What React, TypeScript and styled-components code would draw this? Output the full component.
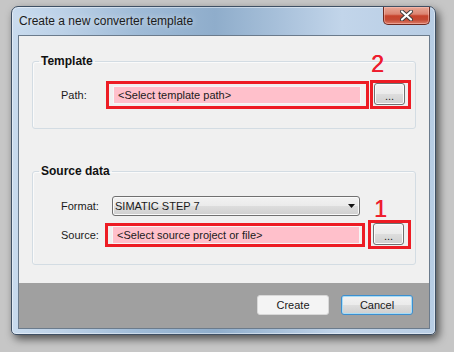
import React from "react";
import styled, { createGlobalStyle } from "styled-components";

const GlobalStyle = createGlobalStyle`
  html, body {
    margin: 0;
    padding: 0;
    background: #c6c6c6;
    font-family: "Liberation Sans", Arial, sans-serif;
  }
`;

const Desktop = styled.div`
  padding: 6px 0 0 11px;
  height: 352px;
  box-sizing: border-box;
`;

const Window = styled.div`
  width: 425px;
  height: 329px;
  box-sizing: border-box;
  display: flex;
  flex-direction: column;
  padding: 0 5px 5px 6px;
  border: 1px solid #3f5064;
  border-radius: 7px 7px 5px 5px;
  background: linear-gradient(
    90deg,
    #c9dbee 0%,
    #bcd1e7 12%,
    #9fbbd7 30%,
    #8fadcb 48%,
    #a6bfd9 62%,
    #c2d5ea 78%,
    #b8cde4 100%
  );
  box-shadow: 3px 4px 9px rgba(0, 0, 0, 0.6), inset 0 0 0 1px rgba(255, 255, 255, 0.45);
`;

const TitleBar = styled.div`
  height: 28px;
  display: flex;
  align-items: center;
  justify-content: space-between;
`;

const Caption = styled.span`
  padding-left: 1px;
  font-size: 12px;
  color: #1b1b1b;
  text-shadow: 0 0 6px rgba(255, 255, 255, 0.7);
`;

const CloseButton = styled.div`
  align-self: flex-start;
  width: 47px;
  height: 18px;
  box-sizing: border-box;
  display: flex;
  align-items: center;
  justify-content: center;
  border: 1px solid #6e2a20;
  border-top: none;
  border-radius: 0 0 5px 5px;
  background: linear-gradient(
    #e8a796 0%,
    #dc8471 42%,
    #c7432c 52%,
    #c44a34 75%,
    #dc7c68 100%
  );
  box-shadow: inset 0 0 0 1px rgba(255, 200, 190, 0.5);
`;

const Client = styled.div`
  flex: 1;
  display: flex;
  flex-direction: column;
  background: #f0f0f0;
  border: 1px solid #6b7b8c;
`;

const Body = styled.div`
  flex: 1;
  padding: 18px 13px 0;
`;

const Group = styled.fieldset<{ $top: number; $padTop: number; $padBottom: number }>`
  margin: ${(p) => p.$top}px 0 0;
  padding: ${(p) => p.$padTop}px 0 ${(p) => p.$padBottom}px 0;
  min-width: 0;
  border: 1px solid #d3dce3;
  border-radius: 3px;
  box-shadow: inset 1px 1px 0 #fafafa;
  display: flex;
  flex-direction: column;
  gap: 4px;
`;

const Legend = styled.legend`
  margin-left: 6px;
  padding: 0 2px;
  font-size: 12px;
  line-height: 14px;
  font-weight: bold;
  color: #111;
`;

const Row = styled.div`
  display: flex;
  align-items: center;
  padding-left: 28px;
`;

const Label = styled.span`
  width: 44px;
  flex: none;
  font-size: 11px;
  color: #1a1a1a;
`;

const Marked = styled.div<{ $pad: string; $shift?: number }>`
  position: relative;
  display: flex;
  margin-left: ${(p) => p.$shift ?? 0}px;
  border: 3px solid #ed1c24;
  padding: ${(p) => p.$pad};
`;

const Badge = styled.span<{ $lift: number; $left: number }>`
  position: absolute;
  left: ${(p) => p.$left}px;
  bottom: calc(100% + ${(p) => p.$lift}px);
  font-size: 23px;
  line-height: 23px;
  color: #ee1c2e;
  text-shadow: 0.4px 0 0 #ee1c2e;
`;

const PathBox = styled.div`
  width: 248px;
  height: 18px;
  box-sizing: border-box;
  border: 1px solid #f6f6f6;
  background: #ffc0cb;
  padding-left: 4px;
  font-size: 11px;
  line-height: 16px;
  color: #1a1a1a;
  white-space: nowrap;
`;

const BrowseButton = styled.div`
  width: 31px;
  height: 22px;
  box-sizing: border-box;
  border: 1px solid #707070;
  border-radius: 3px;
  background: linear-gradient(#f3f3f3 0%, #ebebeb 48%, #dddddd 52%, #cfcfcf 100%);
  box-shadow: inset 0 0 0 1px #fbfbfb;
  display: flex;
  align-items: center;
  justify-content: center;
  font-size: 11px;
  color: #222;
  padding-top: 3px;
`;

const Combo = styled.div`
  margin-left: 7px;
  width: 248px;
  height: 20px;
  box-sizing: border-box;
  border: 1px solid #707070;
  border-radius: 3px;
  background: linear-gradient(#f2f2f2 0%, #ebebeb 48%, #dddddd 52%, #cfcfcf 100%);
  box-shadow: inset 0 0 0 1px #fafafa;
  display: flex;
  align-items: center;
  justify-content: space-between;
  padding: 0 4px 0 2px;
  font-size: 11px;
  color: #1a1a1a;
`;

const Footer = styled.div`
  height: 45px;
  background: #a0a0a0;
  display: flex;
  justify-content: flex-end;
  align-items: flex-start;
  gap: 12px;
  padding: 12px 16px 0 0;
  box-sizing: border-box;
`;

const DialogButton = styled.div<{ $focused?: boolean }>`
  width: 72px;
  height: 20px;
  box-sizing: border-box;
  border-radius: 3px;
  display: flex;
  align-items: center;
  justify-content: center;
  font-size: 11px;
  color: #1a1a1a;
  border: 1px solid ${(p) => (p.$focused ? "#3c8fd0" : "#d8d8d8")};
  background: ${(p) =>
    p.$focused
      ? "linear-gradient(#f2f2f2 0%, #ebebeb 48%, #dddddd 52%, #cfcfcf 100%)"
      : "#f4f4f4"};
  box-shadow: ${(p) => (p.$focused ? "inset 0 0 0 1px #a8dcf5" : "none")};
`;

function CloseGlyph() {
  return (
    <svg width="13" height="11" viewBox="0 0 13 11">
      <path d="M2 1.5 L11 9.5 M11 1.5 L2 9.5" stroke="#3b3b3b" strokeWidth="4" strokeLinecap="round" />
      <path d="M2 1.5 L11 9.5 M11 1.5 L2 9.5" stroke="#ffffff" strokeWidth="2.2" strokeLinecap="round" />
    </svg>
  );
}

function DropArrow() {
  return (
    <svg width="7" height="4" viewBox="0 0 7 4">
      <polygon points="0,0 7,0 3.5,4" fill="#111" />
    </svg>
  );
}

export default function App() {
  return (
    <>
      <GlobalStyle />
      <Desktop>
        <Window>
          <TitleBar>
            <Caption>Create a new converter template</Caption>
            <CloseButton>
              <CloseGlyph />
            </CloseButton>
          </TitleBar>
          <Client>
            <Body>
              <Group $top={0} $padTop={12} $padBottom={19}>
                <Legend>Template</Legend>
                <Row>
                  <Label>Path:</Label>
                  <Marked $pad="2px 5px 2px 4px" $shift={1}>
                    <PathBox>&lt;Select template path&gt;</PathBox>
                  </Marked>
                  <Marked $pad="0 3px 1px 1px" $shift={1}>
                    <Badge $lift={7} $left={-2}>2</Badge>
                    <BrowseButton>...</BrowseButton>
                  </Marked>
                </Row>
              </Group>
              <Group $top={35} $padTop={18} $padBottom={15}>
                <Legend>Source data</Legend>
                <Row>
                  <Label>Format:</Label>
                  <Combo>
                    <span>SIMATIC STEP 7</span>
                    <DropArrow />
                  </Combo>
                </Row>
                <Row>
                  <Label>Source:</Label>
                  <Marked $pad="0 2px 0 4px">
                    <PathBox>&lt;Select source project or file&gt;</PathBox>
                  </Marked>
                  <Marked $pad="0 4px 1px 2px" $shift={3}>
                    <Badge $lift={2} $left={3}>1</Badge>
                    <BrowseButton>...</BrowseButton>
                  </Marked>
                </Row>
              </Group>
            </Body>
            <Footer>
              <DialogButton>Create</DialogButton>
              <DialogButton $focused>Cancel</DialogButton>
            </Footer>
          </Client>
        </Window>
      </Desktop>
    </>
  );
}
